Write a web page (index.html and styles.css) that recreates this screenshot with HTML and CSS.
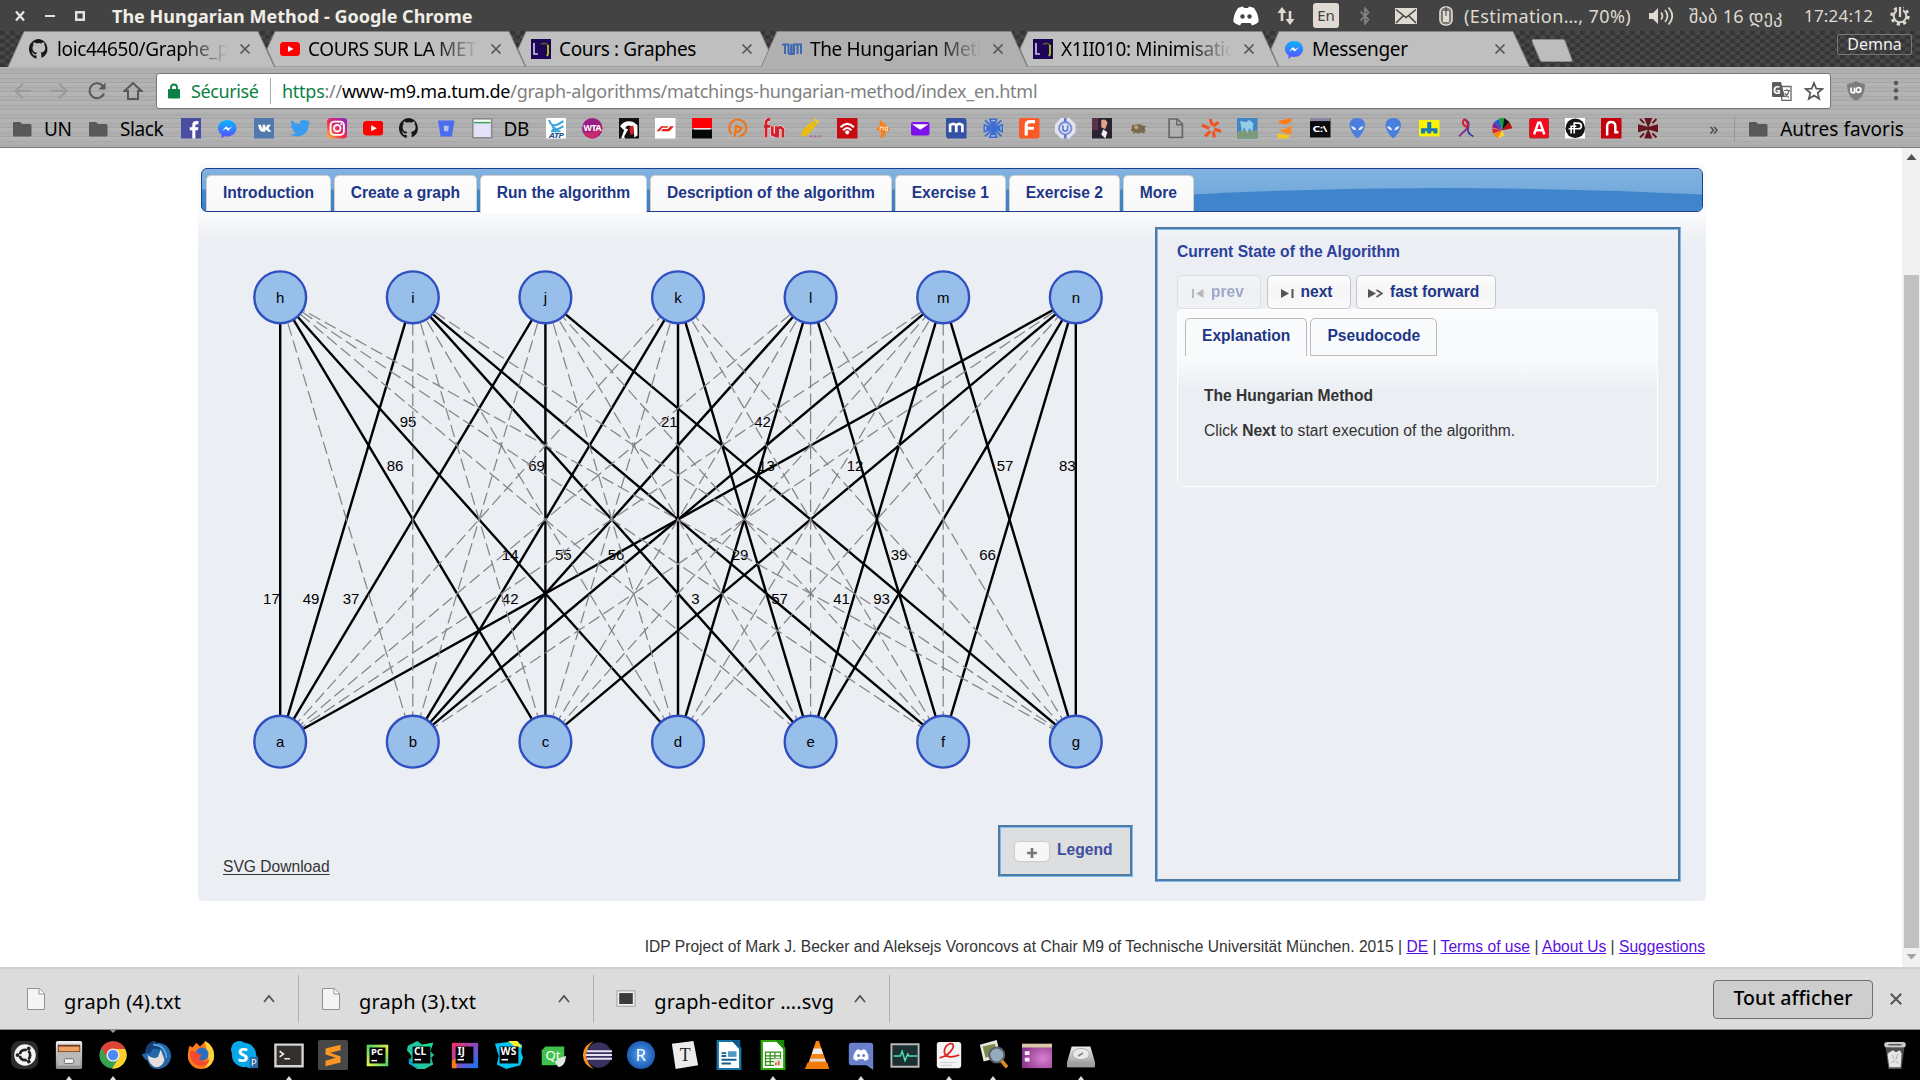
FILE: index.html
```html
<!DOCTYPE html>
<html lang="en">
<head>
<meta charset="utf-8">
<title>The Hungarian Method</title>
<link rel="stylesheet" href="styles.css">
</head>
<body>
<svg width="0" height="0" class="defs">
  <defs>
    <linearGradient id="insta" x1="0" y1="1" x2="1" y2="0"><stop offset="0" stop-color="#fdc33c"/><stop offset=".4" stop-color="#f3314b"/><stop offset="1" stop-color="#8a1fd0"/></linearGradient>
    <linearGradient id="msg" x1="0" y1="0" x2="0" y2="1"><stop offset="0" stop-color="#0ab4ff"/><stop offset="1" stop-color="#5a4bff"/></linearGradient>
    <linearGradient id="steel" x1="0" y1="0" x2="0" y2="1"><stop offset="0" stop-color="#eee"/><stop offset="1" stop-color="#8e8e8e"/></linearGradient>
    <linearGradient id="jb" x1="0" y1="0" x2="1" y2="1"><stop offset="0" stop-color="#fe315d"/><stop offset=".5" stop-color="#8a4ac0"/><stop offset="1" stop-color="#087cfa"/></linearGradient>
    <linearGradient id="pc" x1="0" y1="1" x2="1" y2="0"><stop offset="0" stop-color="#fcf84a"/><stop offset=".5" stop-color="#4fd36a"/><stop offset="1" stop-color="#f0e94c"/></linearGradient>
    <radialGradient id="purple" cx=".7" cy=".6" r=".7"><stop offset="0" stop-color="#d982d0"/><stop offset="1" stop-color="#8f3591"/></radialGradient>
    <radialGradient id="rblue"><stop offset="0" stop-color="#5aa2ee"/><stop offset="1" stop-color="#1b5bb5"/></radialGradient>
    <symbol id="github" viewBox="0 0 16 16"><path d="M8 0C3.6 0 0 3.6 0 8c0 3.500 2.300 6.500 5.500 7.600.4.100.5-.2.500-.4v-2c-2 .400-2.600-.5-2.800-1-.1-.200-.5-1-.8-1.100-.3-.2-.7-.6 0-.6.600 0 1.100.600 1.200.8.700 1.200 1.900.9 2.300.7.100-.5.300-.9.500-1.100-1.800-.2-3.600-.9-3.600-4 0-.9.300-1.600.8-2.100-.1-.2-.4-1 .1-2.100 0 0 .7-.2 2.200.8a7.600 7.600 0 0 1 4 0c1.500-1 2.200-.8 2.200-.8.400 1.100.2 1.900.1 2.100.5.600.8 1.300.8 2.100 0 3.100-1.900 3.800-3.700 4 .3.200.6.700.6 1.500v2.200c0 .200.100.500.5.4A8 8 0 0 0 8 0z" fill="#161616"/></symbol>
    <symbol id="youtube" viewBox="0 0 20 20"><rect x="0" y="3" width="20" height="14" rx="3.500" fill="#f00"/><path d="M8 7l5.500 3L8 13z" fill="#fff"/></symbol>
    <symbol id="messenger" viewBox="0 0 20 20"><path d="M10 2c5 0 9 3.500 9 8s-4 8-9 8q-1.500 0-2.600-.4L4.500 20v-3.700C2.500 15 1 12.800 1 10c0-4.500 4-8 9-8z" fill="url(#msg)"/><path d="M4.800 12.600L9 8l2.300 2.200L15 8l-4.200 4.600-2.300-2.200z" fill="#fff"/></symbol>
    <symbol id="lms" viewBox="0 0 20 20"><path d="M0 0h20v20H0z" fill="#1f0558"/><path d="M3 4v11h4" stroke="#c9c4e0" stroke-width="1.700" fill="none"/><path d="M10 5q6-2 7 2" stroke="#4a5f2a" stroke-width="1.600" fill="none"/><path d="M17 6v9l-1 2" stroke="#b3c91c" stroke-width="1.800" fill="none"/></symbol>
    <symbol id="folder" viewBox="0 0 20 16"><path d="M1 2q0-1 1-1h6l2 2h8q1.500 0 1.500 1.500V14q0 1.500-1.500 1.500H2Q1 15.500 1 14z" fill="#595959"/></symbol>
    <symbol id="alien" viewBox="0 0 20 20"><path d="M10 0c5 0 7.500 3 7.500 7S13 18 10 20C7 18 2.500 11 2.500 7S5 0 10 0z" fill="#4a7fdd"/><path d="M4 8q4 0 5 4-4 0-5-4zM16 8q-4 0-5 4 4 0 5-4z" fill="#e8eef8"/></symbol>
    <symbol id="discord" viewBox="0 0 26 20"><path d="M5 2q3-1.500 5-1.500l1 1.500h4l1-1.500q2 0 5 1.500 5 7 4.500 14-3 3-6.500 3.500L17.500 17h-9L7 19.500Q3.500 19 .5 16 0 9 5 2z" fill="currentColor"/></symbol>
    <symbol id="page" viewBox="0 0 20 22"><path d="M1.500.5h12l5 5v16h-17z" fill="#f4f4f4" stroke="#8f958f"/><path d="M13 .5V6h5.500" fill="#fff" stroke="#8f958f"/></symbol>
    <symbol id="close" viewBox="0 0 12 12"><path d="M1.500 1.500l9 9m0-9l-9 9" stroke="#555" stroke-width="1.700"/></symbol>
    <symbol id="up" viewBox="0 0 12 10"><path d="M1 8l5-6 5 6" stroke="#555" stroke-width="1.800" fill="none"/></symbol>
  </defs>
</svg>

<header class="titlebar">
  <div class="winctl">
    <svg width="12" height="12" viewBox="0 0 12 12"><path d="M2 1.500l8 9m0-9l-8 9" stroke="#e4e1da" stroke-width="2.400"/></svg>
    <svg width="12" height="12" viewBox="0 0 12 12"><path d="M1 6h10" stroke="#e4e1da" stroke-width="2"/></svg>
    <svg width="12" height="12" viewBox="0 0 12 12"><path d="M2.200 2.200h7.600v7.600H2.200z" fill="none" stroke="#e4e1da" stroke-width="2.400"/></svg>
  </div>
  <h1 class="wintitle">The Hungarian Method - Google Chrome</h1>
  <div class="tray">
    <svg class="tray-discord" width="26" height="20"><use href="#discord"/><circle cx="9.500" cy="10.500" r="2.200" fill="#434343"/><circle cx="16.500" cy="10.500" r="2.200" fill="#434343"/></svg>
    <svg class="tray-net" width="20" height="20" viewBox="0 0 20 20"><path d="M6 15V5M14 5v10" stroke="#dfdbd2" stroke-width="2.600"/><path d="M1.500 7L6 1l4.500 6zM9.500 13l4.500 6 4.500-6z" fill="#dfdbd2"/></svg>
    <span class="lang">En</span>
    <svg class="tray-bt" width="12" height="20" viewBox="0 0 12 20"><path d="M1.500 5.500l8 8L6 17.500v-15l3.500 4-8 8" fill="none" stroke="#858585" stroke-width="1.700"/></svg>
    <svg class="tray-mail" width="22" height="16" viewBox="0 0 22 16"><path d="M0 0h22v16H0z" fill="#dfdbd2"/><path d="M1 1.500l10 8 10-8M1 15l7-7m13 7l-7-7" stroke="#434343" stroke-width="1.500" fill="none"/></svg>
    <svg class="tray-mouse" width="14" height="20" viewBox="0 0 14 20"><rect x="1" y="1" width="12" height="18" rx="5" fill="#7b7974" stroke="#dfdbd2" stroke-width="1.600"/><rect x="4" y="5" width="6" height="11" fill="#dfdbd2"/><path d="M7 1v9" stroke="#434343"/></svg>
    <span class="tray-batt">(Estimation…, 70%)</span>
    <svg class="tray-vol" width="26" height="20" viewBox="0 0 26 20"><path d="M1 7h4l5-5v16l-5-5H1z" fill="#dfdbd2"/><path d="M13 6.500q3 3.500 0 7M17 4q5 6 0 12M20.500 1.500q7.500 8.500 0 17" fill="none" stroke="#dfdbd2" stroke-width="1.700"/></svg>
    <span class="tray-date">შაბ 16 დეკ</span>
    <span class="tray-time">17:24:12</span>
    <svg class="tray-gear" width="20" height="20" viewBox="0 0 20 20"><circle cx="10" cy="10" r="6.300" fill="none" stroke="#dfdbd2" stroke-width="2"/><circle cx="10" cy="10" r="8.400" fill="none" stroke="#dfdbd2" stroke-width="2.600" stroke-dasharray="3.200 3.400"/><path d="M10 0v11" stroke="#434343" stroke-width="6"/><path d="M10 1v10" stroke="#dfdbd2" stroke-width="2.200"/></svg>
  </div>
</header>

<nav class="tabstrip">
  <div class="tab"><svg class="tabshape" viewBox="0 0 267 36"><path d="M0 36L16 .5H250L266.500 36"/></svg><svg class="fav"><use href="#github"/></svg><span class="tablabel fade">loic44650/Graphe_p</span><svg class="x"><use href="#close"/></svg></div>
  <div class="tab"><svg class="tabshape" viewBox="0 0 267 36"><path d="M8 18L16 .5H250L266.500 36H16z"/></svg><svg class="fav"><use href="#youtube"/></svg><span class="tablabel fade">COURS SUR LA MET</span><svg class="x"><use href="#close"/></svg></div>
  <div class="tab"><svg class="tabshape" viewBox="0 0 267 36"><path d="M8 18L16 .5H250L266.500 36H16z"/></svg><svg class="fav"><use href="#lms"/></svg><span class="tablabel">Cours : Graphes</span><svg class="x"><use href="#close"/></svg></div>
  <div class="tab active"><svg class="tabshape" viewBox="0 0 267 36"><path d="M0 36L16 .5H250L266.500 36"/></svg><svg class="fav" viewBox="0 0 20 20"><path d="M0 5.500h6.500V15M3 6v9M6.500 15h5V5.500M9.200 15V5M12 15V5.500h7V15M15.500 6v9" fill="none" stroke="#3f69b3" stroke-width="2"/></svg><span class="tablabel fade">The Hungarian Meth</span><svg class="x"><use href="#close"/></svg></div>
  <div class="tab"><svg class="tabshape" viewBox="0 0 267 36"><path d="M8 18L16 .5H250L266.500 36H16z"/></svg><svg class="fav"><use href="#lms"/></svg><span class="tablabel fade">X1II010: Minimisatio</span><svg class="x"><use href="#close"/></svg></div>
  <div class="tab"><svg class="tabshape" viewBox="0 0 267 36"><path d="M8 18L16 .5H250L266.500 36H16z"/></svg><svg class="fav"><use href="#messenger"/></svg><span class="tablabel">Messenger</span><svg class="x"><use href="#close"/></svg></div>
  <svg class="newtab" width="44" height="26" viewBox="0 0 44 26"><path d="M2 1.500h30q1.500 0 2 1.500l7 19q.5 1.500-1 1.500H11q-1.500 0-2-1.500L1 3q-.5-1.500 1-1.500z" fill="#bdbdbd" stroke="#8b8b8b"/></svg>
  <span class="profile">Demna</span>
</nav>

<section class="toolbar">
  <div class="navrow">
    <div class="navbtns">
      <svg width="20" height="20" viewBox="0 0 20 20"><path d="M18 10H3m7-7.500L2.500 10l7.500 7.500" fill="none" stroke="#999" stroke-width="2"/></svg>
      <svg width="20" height="20" viewBox="0 0 20 20"><path d="M2 10h15M10 2.500l7.500 7.500-7.500 7.500" fill="none" stroke="#999" stroke-width="2"/></svg>
      <svg width="20" height="20" viewBox="0 0 20 20"><path d="M15.800 5A7.500 7.500 0 1 0 17 12.500" fill="none" stroke="#585858" stroke-width="2.100"/><path d="M18.500 1.500v7h-7z" fill="#585858"/></svg>
      <svg width="20" height="20" viewBox="0 0 20 20"><path d="M1.500 10L10 2l8.500 8H15v8H5v-8z" fill="none" stroke="#585858" stroke-width="2"/></svg>
    </div>
    <div class="omnibox">
      <svg class="lock" width="12" height="16" viewBox="0 0 12 16"><rect y="6" width="12" height="9.500" rx="1" fill="#0b8043"/><path d="M3 7V4.500q0-3 3-3t3 3V7" fill="none" stroke="#0b8043" stroke-width="1.800"/></svg>
      <span class="secure">Sécurisé</span>
      <span class="url"><span class="scheme">https</span>://<b>www-m9.ma.tum.de</b>/graph-algorithms/matchings-hungarian-method/index_en.html</span>
      <svg class="translate" width="20" height="19" viewBox="0 0 20 19"><path d="M8 4.500h11v13.800H10z" fill="#fff" stroke="#666" stroke-width="1.300"/><path d="M0 1q0-1 1-1h8l4 15H1q-1 0-1-1z" fill="#5b5b5b"/><text x="1" y="11.500" font-size="10.500" font-weight="700" fill="#fff">G</text><path d="M12 8.500h6M15 7v2m2 0q-1 4-4 6m0-4q1 3 4 4.500" stroke="#666" fill="none" stroke-width="1.200"/></svg>
      <svg width="20" height="20" viewBox="0 0 20 20"><path d="M10 2l2.300 5.600 6 .4-4.600 3.900 1.500 5.900-5.200-3.300-5.200 3.300 1.500-5.900L1.700 8l6-.4z" fill="none" stroke="#555" stroke-width="1.700"/></svg>
    </div>
    <svg class="ublock" width="18" height="20" viewBox="0 0 18 20"><path d="M9 0q4 3 9 3 0 13-9 17Q0 16 0 3q5 0 9-3z" fill="#7c7c7c"/><path d="M4 6.500v3.500q0 1.700 2 1.700h1.500V6.500" fill="none" stroke="#fff" stroke-width="1.700"/><circle cx="11.500" cy="9" r="2.300" fill="none" stroke="#fff" stroke-width="1.700"/></svg>
    <svg class="dots" width="6" height="22" viewBox="0 0 6 22"><circle cx="3" cy="3" r="2.200"/><circle cx="3" cy="10.500" r="2.200"/><circle cx="3" cy="18" r="2.200"/></svg>
  </div>
  <div class="bookmarks">
    <span class="bmf un"><svg width="20" height="16"><use href="#folder"/></svg>UN</span>
    <span class="bmf slack"><svg width="20" height="16"><use href="#folder"/></svg>Slack</span>
    <div class="icons">
      <i><svg viewBox="0 0 20 20"><path d="M0 0h20v20H0z" fill="#4a4ea3"/><path d="M11 20v-8H8.500V9H11V7q0-4 4-4h2v3h-1.500q-1.500 0-1.500 1.500V9h3l-.5 3H14v8z" fill="#fff"/></svg></i>
      <i><svg><use href="#messenger"/></svg></i>
      <i><svg viewBox="0 0 20 20"><path d="M0 0h20v20H0z" fill="#5179ab"/><path d="M4 6.500h2.500l2 4.500V6.500h2.500V9.500l2.500-3h3L14 10l3 3.500h-3l-3-2.500v2.500H9Q5 13.500 4 6.500z" fill="#fff"/></svg></i>
      <i><svg viewBox="0 0 20 20"><path d="M0 16q4 .5 6-1.500-3-.5-3.500-3h1.500Q.5 10 1 7l1.500.5Q0 5 1.500 2q3.500 4 8 4Q9 2 13.500 2q2 0 3 1L19 2l-1.500 2.500L20 4l-2 2.500Q18 17 7.500 18 3.500 18 0 16z" fill="#3a9bf0"/></svg></i>
      <i><svg viewBox="0 0 20 20"><rect width="20" height="20" rx="4" fill="url(#insta)"/><rect x="3.500" y="3.500" width="13" height="13" rx="3.500" fill="none" stroke="#fff" stroke-width="1.800"/><circle cx="10" cy="10" r="3.200" fill="none" stroke="#fff" stroke-width="1.800"/><circle cx="14" cy="6" r="1" fill="#fff"/></svg></i>
      <i><svg><use href="#youtube"/></svg></i>
      <i><svg><use href="#github"/></svg></i>
      <i><svg viewBox="0 0 20 20"><path d="M2 2.500h16L15.500 18h-11z" fill="#4a6df0"/><path d="M7.500 7.500h5l-.6 5.500H8z" fill="#b7bfe8"/></svg></i>
      <i><svg viewBox="0 0 20 20"><path d="M.8.800h18.400v18.400H.8z" fill="#e6e0fb" stroke="#8a8a8a" stroke-width="1.500"/><path d="M2 2h16v3H2z" fill="#f6fff6"/><path d="M2 4.500h16" stroke="#43a05a" stroke-width="1.500"/></svg></i>
    </div>
    <span class="db">DB</span>
    <div class="icons">
      <i><svg viewBox="0 0 20 20"><path d="M0 0h20v20H0z" fill="#fff"/><path d="M3 2q2 6 6 5t8-4M6 7q2 5 5 4t6-3M10 10q-4 1-4 3h8" stroke="#38a4dc" stroke-width="2" fill="none"/><text x="3" y="19.500" font-size="7" font-weight="700" font-style="italic" textLength="14" lengthAdjust="spacingAndGlyphs" fill="#24508e">ATP</text></svg></i>
      <i><svg viewBox="0 0 20 20"><circle cx="10" cy="10" r="10" fill="#9c1c86"/><path d="M1 14q9 2 18-8-1 13-9 14-6 0-9-6z" fill="#c72a6c"/><text x="1.500" y="13" font-size="8" font-weight="700" textLength="17" lengthAdjust="spacingAndGlyphs" fill="#fff">WTA</text></svg></i>
      <i><svg viewBox="0 0 20 20"><path d="M0 0h20v20H0z" fill="#111"/><path d="M1 8Q6 1 14 4l4 3v10l-3 2-1-10q-6-4-8 1l3 1-4 7 1 2H2l3-8z" fill="#fff"/><path d="M10 9l4-2v9h-3z" fill="#e01a22"/></svg></i>
      <i><svg viewBox="0 0 20 20"><path d="M0 0h20v20H0z" fill="#fff"/><path d="M1.500 13L6 8h7l-1 1.500H7L4.500 13zM6 13l1.500-2.200h5L15 8h3.500L14 13z" fill="#e32119"/></svg></i>
      <i><svg viewBox="0 0 20 20"><path d="M0 0h20v10H0z" fill="#fc0003"/><path d="M0 11h20v9H0z" fill="#040a0c"/><path d="M2 10h16v1.200H2z" fill="#fff"/></svg></i>
      <i><svg viewBox="0 0 20 20"><path d="M3.500 15.500A8.300 8.300 0 1 1 11 18" fill="none" stroke="#f0741a" stroke-width="2"/><path d="M6.500 18.500l1.500-11 5.500 2.500-5 4.500" fill="none" stroke="#f0741a" stroke-width="2.200" stroke-linejoin="round"/></svg></i>
      <i><svg viewBox="0 0 20 20"><path d="M2 19V4q0-3 4-2.500M0 8h6M8 8v7q0 3 4 1V8m0 8v3m1.500 0V11q2-4 5 0v8" fill="none" stroke="#fff" stroke-width="4"/><path d="M2 19V4q0-3 4-2.500M0 8h6M8 8v7q0 3 4 1V8m0 8v3m1.500 0V11q2-4 5 0v8" fill="none" stroke="#d3202c" stroke-width="2.900"/></svg></i>
      <i><svg viewBox="0 0 20 20"><path d="M0 18l1.500-6L11 2.500l4.500 4L6 17z" fill="#eabb12"/><path d="M12 1.500l2-1.500 4 4-1.500 2z" fill="#f0c92a"/><path d="M9 18h2M13 18h2M17 18h2" stroke="#b05ba0" stroke-width="1.800"/></svg></i>
      <i><svg viewBox="0 0 20 20"><path d="M0 0h20v20H0z" fill="#c80b12"/><path d="M3.500 9q6.500-6.500 13 0M6 12q4-4.500 8 0" fill="none" stroke="#fff" stroke-width="2"/><circle cx="10" cy="14" r="2" fill="#fff"/></svg></i>
      <i><svg viewBox="0 0 20 20"><path d="M6 1l6 5 5 6-4 1-2 5-4 2 1-6-5-3 4-4z" fill="#f5821f"/><path d="M7 12V9h3v3m2-3v3h2V9z" stroke="#fbe3c8" fill="none"/></svg></i>
      <i><svg viewBox="0 0 20 20"><rect x="1" y="4" width="18" height="13" rx="2" fill="#7b12ee"/><path d="M2 6l8 5.500L18 6" fill="#fff" /></svg></i>
      <i><svg viewBox="0 0 20 20"><path d="M0 0h17q3 0 3 3v17H3q-3 0-3-3z" fill="#3352a6"/><path d="M4 14V5.500M4 7q3-2.500 6 0v7m0-7q3-2.500 6 0v7" fill="none" stroke="#fff" stroke-width="2.600"/></svg></i>
      <i><svg viewBox="0 0 20 20"><path d="M5.500.5h9L11.500 8.500 19.500 5.500v9l-8-3 3 8h-9l3-8-8 3v-9l8 3z" fill="#3b6ed2"/><path d="M2 2l16 16M18 2L2 18" stroke="#3b6ed2" stroke-width="1.800"/><path d="M8 2.500h4M8 17.500h4M2.500 8v4M17.500 8v4" stroke="#a9bfe6" stroke-width="1.200"/></svg></i>
      <i><svg viewBox="0 0 20 20"><rect width="20" height="20" rx="2" fill="#fb5a25"/><path d="M7 17V7q0-3.500 4-3.500h4.500M7 10h7.500" fill="none" stroke="#fff" stroke-width="3"/></svg></i>
      <i><svg viewBox="0 0 20 20"><path d="M6 0h8l6 6v8l-6 6H6l-6-6V6z" fill="#e3e6ef"/><circle cx="10" cy="10" r="6" fill="none" stroke="#7f93dc" stroke-width="2"/><path d="M10 0v4M10 16v4" stroke="#5f77cf" stroke-width="2.500"/><path d="M7.700 7v3.500q0 2.300 2.300 2.300t2.300-2.300V7" stroke="#5f77cf" stroke-width="1.600" fill="none"/></svg></i>
      <i><svg viewBox="0 0 20 20"><path d="M0 0h20v20H0z" fill="#2b2232"/><path d="M0 0h6v12H0z" fill="#5a3148"/><path d="M9 2q5-2 6 3l-2 6-4-2z" fill="#e3a287"/><path d="M11 11l4 3-2 6-4-4z" fill="#f0eeee"/></svg></i>
      <i><svg viewBox="0 0 20 20"><ellipse cx="10" cy="10.500" rx="6.500" ry="4.500" fill="#7b6a4e"/><path d="M4 7l3 4-4 1M17 8l-3 2 3 3M6 14l-1 1M14 13l2 2" stroke="#756544" stroke-width="1.500" fill="none"/><circle cx="8" cy="9" r="2" fill="#b3a37e"/></svg></i>
      <i><svg viewBox="0 0 20 20"><path d="M4 1h8l5 5v13H4z" fill="none" stroke="#666" stroke-width="1.600"/><path d="M11.500 1v5.500H17" fill="none" stroke="#666" stroke-width="1.400"/></svg></i>
      <i><svg viewBox="0 0 20 20"><path d="M9 1l2 6M17 4l-5 4M20 13l-7-2M13 19l-1-6M4 18l5-5M1 7l7 3" fill="none" stroke="#f4511e" stroke-width="3"/></svg></i>
      <i><svg viewBox="0 0 20 20"><path d="M0 0h20v20H0z" fill="#3e86c6"/><path d="M0 14q6-4 10-2t10-1v9H0z" fill="#7b9a7a"/><path d="M3 3l6 1 3-2 4 3-1 9-3-4-2 5-3-6-2 5z" fill="#93cbe8"/></svg></i>
      <i><svg viewBox="0 0 20 20"><path d="M17 0q1 4-4 6-7 1-9-3z" fill="#ff7a1a"/><path d="M17 7v9q-8 0-12-5 6 1 12-4z" fill="#ff8a1f"/><path d="M3 15l13 2-3 3H4z" fill="#f6c521"/></svg></i>
      <i><svg viewBox="0 0 20 20"><path d="M0 0h20v19H0z" fill="#0b0b0f"/><path d="M0 0h20v3H0z" fill="#8d84a8"/><text x="2.500" y="13.500" font-size="8" font-weight="700" fill="#fff" textLength="14" lengthAdjust="spacingAndGlyphs">C:\</text></svg></i>
      <i><svg><use href="#alien"/></svg></i>
      <i><svg><use href="#alien"/></svg></i>
      <i><svg viewBox="0 0 20 20"><path d="M0 2h20v16H0z" fill="#fbf500"/><path d="M8 4h4v6h6v5h-4v-2h-2v2H8v-2H6v2H2v-5h6z" fill="#1a78b8"/></svg></i>
      <i><svg viewBox="0 0 20 20"><path d="M8 1q6 2 4 8t5 9" stroke="#2a35a8" stroke-width="1.600" fill="none"/><path d="M8 1q-4 5 3 8 2-4-3-8" stroke="#d32038" stroke-width="2" fill="none"/><path d="M11 10l-8 8" stroke="#8a2a8c" stroke-width="1.800"/></svg></i>
      <i><svg viewBox="0 0 20 20"><path d="M10 12L0 9l2-5z" fill="#8b1d8c"/><path d="M10 12L2 4l5-3z" fill="#1b5bd0"/><path d="M10 12L7 0h5z" fill="#1a9a3c"/><path d="M10 12l2-12 5 4z" fill="#111"/><path d="M10 12l7-8 3 6z" fill="#b11"/><path d="M10 12L0 10l1 5z" fill="#e8262a"/><path d="M10 12l-9 4 5 4z" fill="#fb8c00"/><path d="M10 12L6 20l6-3z" fill="#fdd835"/></svg></i>
      <i><svg viewBox="0 0 20 20"><rect x=".5" y=".5" width="19" height="19" rx="2" fill="#f5081d" stroke="#a33"/><path d="M5 16l4-11.500h2L15 16M6.500 12h7" stroke="#fff" stroke-width="2.400" fill="none"/></svg></i>
      <i><svg viewBox="0 0 20 20"><path d="M0 0h20v20H0z" fill="#fff"/><circle cx="10" cy="10" r="9.500" fill="#151515"/><path d="M6 15V8h5M9 15V5h4q3 0 3 2.700T13 10.500H3.500" fill="none" stroke="#fff" stroke-width="1.600"/></svg></i>
      <i><svg viewBox="0 0 20 20"><path d="M0 0h20v20H0z" fill="#c4000c"/><path d="M6 17V8q0-4 4-4t4 4v6h3" fill="none" stroke="#fff" stroke-width="2.400"/></svg></i>
      <i><svg viewBox="0 0 20 20"><path d="M6 0h8l-3.500 8.500L20 6v8l-9.500-2.500L14 20H6l3.500-8.500L0 14V6l9.500 2.500z" fill="#68141c"/><path d="M2 1l4 4M18 1l-4 4M2 19l4-4M18 19l-4-4" stroke="#68141c" stroke-width="2"/></svg></i>
    </div>
    <span class="more">»</span>
    <span class="bmf other"><svg width="20" height="16"><use href="#folder"/></svg>Autres favoris</span>
  </div>
</section>

<main class="viewport">
  <div class="content">
    <div class="pane">
      <ul class="maintabs">
        <li>Introduction</li><li>Create a graph</li><li class="sel">Run the algorithm</li><li>Description of the algorithm</li><li>Exercise 1</li><li>Exercise 2</li><li>More</li>
        <svg class="wave" viewBox="0 0 510 43" preserveAspectRatio="none"><path d="M0 26Q250 13 510 26V43H0z" fill="#4085cc"/></svg>
      </ul>
      <div class="body">
        <div class="left">
          <svg class="graph" width="950" height="613" viewBox="198 212 950 613"></svg>
          <div class="underline">
            <a class="dl">SVG Download</a>
            <div class="legend"><span class="plus"><svg width="12" height="12" viewBox="0 0 12 12"><path d="M6 1v10M1 6h10" stroke="#777" stroke-width="2.600"/></svg></span>Legend</div>
          </div>
        </div>
        <aside class="state">
          <h2>Current State of the Algorithm</h2>
          <div class="buttons">
            <span class="btn off"><svg width="13" height="9" viewBox="0 0 13 9"><path d="M1 0h2v9H1zM12.500 0v9L5 4.500z" fill="#666"/></svg>prev</span>
            <span class="btn"><svg width="13" height="9" viewBox="0 0 13 9"><path d="M10.500 0h2v9h-2zM0 0v9l8-4.500z" fill="#555"/></svg>next</span>
            <span class="btn ff"><svg width="15" height="9" viewBox="0 0 15 9"><path d="M0 0v9l8-4.500z" fill="#555"/><path d="M8.500 1L14 4.500 8.500 8" fill="none" stroke="#555" stroke-width="1.600"/></svg>fast forward</span>
          </div>
          <div class="inner">
            <div class="subtabs"><span class="on">Explanation</span><span>Pseudocode</span></div>
            <h3>The Hungarian Method</h3>
            <p>Click <b>Next</b> to start execution of the algorithm.</p>
          </div>
        </aside>
      </div>
    </div>
    <footer>IDP Project of Mark J. Becker and Aleksejs Voroncovs at Chair M9 of Technische Universität München. 2015 | <a>DE</a> | <a>Terms of use</a> | <a>About Us</a> | <a>Suggestions</a></footer>
  </div>
  <div class="scroll">
    <svg width="18" height="20" viewBox="0 0 18 20"><path d="M4.500 12L9.500 6l5 6z" fill="#505050"/></svg>
    <div class="thumb"></div>
    <svg width="18" height="18" viewBox="0 0 18 18"><path d="M4.500 6L9.500 11.500l5-5.500z" fill="#a3a3a3"/></svg>
  </div>
</main>

<section class="shelf">
  <div class="dlitem"><svg width="20" height="22"><use href="#page"/></svg><span>graph (4).txt</span><svg class="chev" width="12" height="10"><use href="#up"/></svg></div>
  <div class="dlitem"><svg width="20" height="22"><use href="#page"/></svg><span>graph (3).txt</span><svg class="chev" width="12" height="10"><use href="#up"/></svg></div>
  <div class="dlitem"><svg width="20" height="22" viewBox="0 0 22 22"><path d="M1 2h20v17H1z" fill="#eee" stroke="#999"/><path d="M3.500 4.500h15v12h-15z" fill="#3b3b3b"/></svg><span>graph-editor ….svg</span><svg class="chev" width="12" height="10"><use href="#up"/></svg></div>
  <span class="showall">Tout afficher</span>
  <svg class="shelfx" width="14" height="14"><use href="#close"/></svg>
</section>

<nav class="launcher">
  <i><svg viewBox="0 0 32 32"><rect x="1" y="1" width="29" height="30" rx="9" fill="#2c2c2c"/><circle cx="16" cy="16" r="11.500" fill="#f4f4f4"/><circle cx="16" cy="16" r="5.500" fill="none" stroke="#222" stroke-width="3"/><path d="M16 16L8 16M16 16l4-7M16 16l4 7" stroke="#f4f4f4" stroke-width="1.500"/><circle cx="8" cy="16" r="2" fill="#222"/><circle cx="20" cy="9" r="2" fill="#222"/><circle cx="20" cy="23" r="2" fill="#222"/></svg></i>
  <i class="run"><svg viewBox="0 0 32 32"><rect x="2" y="1" width="28" height="30" rx="2" fill="url(#steel)"/><path d="M4 5h24v8H4z" fill="#6b3b22"/><path d="M5 7h22v5H5z" fill="#f0a064"/><path d="M4 13h24v14H4z" fill="#b9b9b9"/><rect x="11" y="20" width="10" height="5" rx="1" fill="#f4f4f4" stroke="#666"/></svg></i>
  <i class="run top"><svg viewBox="0 0 32 32"><circle cx="16" cy="16" r="14.500" fill="#37a24f"/><path d="M16 16L3.400 8.700A14.500 14.500 0 0 1 29 9.500H16z" fill="#db4437"/><path d="M3.400 8.700L10 19l6-3V9.500z" fill="#db4437"/><path d="M29 9.500A14.500 14.500 0 0 1 15 30.500l7-11-6-10z" fill="#fdd02f"/><circle cx="16" cy="16" r="7" fill="#eee"/><circle cx="16" cy="16" r="5.500" fill="#4a8af4"/></svg></i>
  <i><svg viewBox="0 0 32 32"><path d="M4 14Q3 4 13 1l2 2q14 0 16 13 0 12-13 15Q8 31 6 22q-5-2-6-7z" fill="#2467a8"/><path d="M13 1Q4 4 3 13l5 2 4-6 8 1q-2-6-7-9z" fill="#153f78"/><path d="M6 16q5 5 11 2l3-8 4 11q-2 8-9 8-8-2-9-13z" fill="#e8dfdc"/><path d="M12 5q13 0 14 14" stroke="#5aa5e0" fill="none" stroke-width="2"/></svg></i>
  <i><svg viewBox="0 0 32 32"><path d="M4 6l3 2 4-5 4 4 6-6q9 6 9 16a14 14 0 0 1-28 0Q2 10 4 6z" fill="#ff7a18"/><path d="M20 1q10 5 10 16-1 10-10 13 6-8 3-15z" fill="#ffd43a"/><circle cx="17" cy="15" r="7" fill="#2d6ec2"/><path d="M4 12q7-1 9 3l4 1-3 4 4 3q6 0 7-3 0 7-9 8Q4 26 4 12z" fill="#f54a32"/></svg></i>
  <i><svg viewBox="0 0 32 32"><circle cx="10" cy="10" r="9" fill="#08a7ea"/><circle cx="15" cy="16" r="13" fill="#08a7ea"/><circle cx="22" cy="22" r="8" fill="#08a7ea"/><text x="8" y="23" font-size="21" font-weight="700" fill="#fff">S</text><path d="M21 18h9v12h-9z" fill="#2a68a8"/><text x="22.500" y="28" font-size="10" fill="#fff">P</text></svg></i>
  <i class="run"><svg viewBox="0 0 32 32"><path d="M1.500 5h29v23h-29z" fill="#34302e" stroke="#d5d5d5" stroke-width="2.500"/><path d="M6 12l4 3-4 3M11 20h6" stroke="#eee" stroke-width="1.800" fill="none"/></svg></i>
  <i><svg viewBox="0 0 32 32"><rect width="32" height="32" rx="2" fill="#474747"/><path d="M24 5v6L13 13.500l11 4V24L8 28v-6l11-3L8 15.500V9z" fill="#fb9524"/></svg></i>
  <i><svg viewBox="0 0 32 32"><path d="M5 5h23v23H5z" fill="url(#pc)"/><path d="M8 8h17v17H8z" fill="#000"/><text x="9.500" y="16.500" font-size="10" font-weight="700" fill="#fff">PC</text><path d="M10 22h6" stroke="#fff" stroke-width="1.500"/></svg></i>
  <i><svg viewBox="0 0 32 32"><path d="M2 6l10-5 5 4 12-2-3 9 4 4-3 3 2 7-9 5H12l-9-6 3-8-5-6z" fill="#22c7a0"/><path d="M12 1l5 4 12-2-3 8-8-4z" fill="#22d88f"/><path d="M3 19l6 8 5 4-11-6z" fill="#0a9bd8"/><path d="M7 7h19v18H7z" fill="#000"/><text x="8.500" y="16" font-size="11" font-weight="700" fill="#fff">CL</text><path d="M9 21h7" stroke="#fff" stroke-width="1.700"/></svg></i>
  <i><svg viewBox="0 0 32 32"><path d="M2 3h28v27H2z" fill="url(#jb)"/><path d="M2 22l5-4v12H2z" fill="#f97a12"/><path d="M6 7h19v18H6z" fill="#000"/><text x="8" y="16" font-size="11" font-weight="700" fill="#fff">IJ</text><path d="M8 21h7" stroke="#fff" stroke-width="1.700"/></svg></i>
  <i><svg viewBox="0 0 32 32"><path d="M1 4l14-2 7-1 8 4-1 8 2 6-3 8-8 2-7 2-10-5 2-9z" fill="#07c3f2"/><path d="M15 1l10 0 5 7-8-1z" fill="#fcee39"/><path d="M6 7h20v18H6z" fill="#000"/><text x="7" y="16" font-size="11" font-weight="700" fill="#fff" textLength="17">WS</text><path d="M8 21h7" stroke="#fff" stroke-width="1.700"/></svg></i>
  <i><svg viewBox="0 0 32 32"><path d="M8 7h20v15l-5 5H4V11z" fill="#3fc24c"/><text x="8" y="21" font-size="14" fill="#fff">Qt</text><path d="M18 24q2-5 12-7-1 11-8 12z" fill="#dfe5df"/></svg></i>
  <i><svg viewBox="0 0 32 32"><path d="M13 1Q1 5 1 16t12 15Q5 26 5 16T13 1z" fill="#f7941e"/><circle cx="18" cy="16" r="13.500" fill="#3b3160"/><path d="M5 12h27M4 16h28M5 20h27" stroke="#e6e4f2" stroke-width="2"/></svg></i>
  <i><svg viewBox="0 0 32 32"><circle cx="16" cy="16" r="15" fill="url(#rblue)"/><text x="10" y="22" font-size="18" fill="#fff">R</text></svg></i>
  <i><svg viewBox="0 0 32 32"><path d="M2 4l23-3 5 26-24 4z" fill="#ececec"/><text x="10.500" y="22" font-family="Liberation Serif, serif" font-size="19" fill="#222">T</text></svg></i>
  <i><svg viewBox="0 0 32 32"><path d="M4 1h17l7 8v22H4z" fill="#fff" stroke="#1673a5" stroke-width="2.500"/><path d="M18 0h10v10z" fill="#0c5c90"/><path d="M8 14h5M8 17h5M8 21h16M8 25h10" stroke="#14608f" stroke-width="2"/><path d="M15 12h9v6h-9z" fill="#4c9ac5"/></svg></i>
  <i class="run"><svg viewBox="0 0 32 32"><path d="M4 1h17l7 8v22H4z" fill="#fff" stroke="#2ba80c" stroke-width="2.500"/><path d="M18 0h10v10z" fill="#1c8a05"/><path d="M8 13h16v14H8zM8 17h16M8 20h16M8 23h16M13 13v14M18 13v14" stroke="#2f8f15" stroke-width="1.300" fill="none"/><path d="M17 20h9v8h-9z" fill="#e5efe6"/><path d="M19 27v-3M22 27v-5" stroke="#e2672a" stroke-width="2"/></svg></i>
  <i><svg viewBox="0 0 32 32"><path d="M15 1h3l9 26H6z" fill="#f98512"/><path d="M12.500 9h8l2 6H10.500z" fill="#eee"/><path d="M8.800 20h15.600l1 3H8z" fill="#ddd"/><path d="M6 24h21l2 7H3z" fill="#f07b0a"/></svg></i>
  <i class="run"><svg viewBox="0 0 32 32"><path d="M6 3h20q3 0 3 3v26l-7-5H6q-3 0-3-3V6q0-3 3-3z" fill="#6a80cc"/><path class="face" transform="translate(7.500 9.500) scale(.65)" d="M5 2q3-1.500 5-1.500l1 1.500h4l1-1.500q2 0 5 1.500 5 7 4.500 14-3 3-6.500 3.500L17.500 17h-9L7 19.500Q3.500 19 .5 16 0 9 5 2z" fill="#fff"/><circle cx="13.300" cy="16.500" r="1.600" fill="#6a80cc"/><circle cx="18.700" cy="16.500" r="1.600" fill="#6a80cc"/></svg></i>
  <i><svg viewBox="0 0 32 32"><path d="M1.500 4.500h29v24h-29z" fill="#1d3031" stroke="#b9b9b9" stroke-width="2"/><path d="M4 17h7l2-5 3 10 3-7 1 2h9" stroke="#4de0bd" stroke-width="1.600" fill="none"/></svg></i>
  <i class="run"><svg viewBox="0 0 32 32"><rect x="3" y="2" width="26" height="28" rx="3" fill="#f3f3f3"/><path d="M6 19q9-2 14-10 2-6-3-5-6 2-6 9 2 8 16 3" fill="none" stroke="#dd2222" stroke-width="1.800"/><path d="M7 24h16M7 27h12" stroke="#ccc"/></svg></i>
  <i class="run"><svg viewBox="0 0 32 32"><path d="M2 5l18-5 4 18-18 5z" fill="#e9e6dc"/><path d="M5 7l13-3 2 11-12 4z" fill="#7d8a4c"/><circle cx="20" cy="16" r="8" fill="#95a9bf" stroke="#596069" stroke-width="2.200"/><path d="M25 22l6 7" stroke="#d58c22" stroke-width="4"/></svg></i>
  <i><svg viewBox="0 0 32 32"><path d="M0 4h32v26H0z" fill="url(#purple)"/><path d="M0 4h32v4H0z" fill="#d9c9a5"/><path d="M3 12h5v4H3zM3 19h5v4H3z" fill="#f5eef5"/></svg></i>
  <i class="run"><svg viewBox="0 0 32 32"><path d="M6 7h20l5 17v5H1v-5z" fill="url(#steel)"/><ellipse cx="16" cy="15" rx="9" ry="6" fill="#e9e9e9" stroke="#aaa"/><path d="M13 17l5-3" stroke="#888" stroke-width="2"/><path d="M2 24h28v5H2z" fill="#9f9f9f"/></svg></i>
  <i class="trash"><svg viewBox="0 0 32 32"><path d="M6 8h20l-3 23H9z" fill="#4f4f4f"/><path d="M10 13l4-2 3 2 4-2 2 3-1 15H10L8 15z" fill="#e6e6e6"/><path d="M13 16l2 4M19 15l-2 6M12 24l4-2M20 25l-3-2" stroke="#aaa"/><rect x="4.500" y="2" width="23" height="6" rx="3" fill="#c9c9c9"/><path d="M9 5h14" stroke="#555" stroke-width="1.500"/></svg></i>
</nav>
<script src="graph.js"></script>
</body>
</html>
```
FILE: styles.css
```css
* { box-sizing: border-box; }
body {
  margin: 0; width: 1920px; height: 1080px; overflow: hidden;
  display: flex; flex-direction: column; background: #fff;
  font-family: "Noto Sans", "DejaVu Sans", sans-serif; color: #000;
}
svg { display: block; flex: none; }
.defs { position: absolute; }
i { font-style: normal; }

.titlebar { height: 31px; background: #434343; display: flex; align-items: center; flex: none; color: #dfdbd2; }
.winctl { display: flex; gap: 18px; padding-left: 14px; width: 112px; flex: none; }
.wintitle { margin: 0; font-size: 18px; line-height: 30px; font-weight: 700; letter-spacing: 0; color: #f0ede6; white-space: nowrap; flex: 1; }
.tray { display: flex; align-items: center; white-space: nowrap; font-size: 17px; height: 31px; flex: none; padding-right: 10px; }
.tray-discord { margin-right: 17px; color: #fff; }
.tray-net { margin-right: 17px; }
.lang { background: #dfdbd2; color: #434343; width: 26px; height: 25px; line-height: 25px; border-radius: 3px; text-align: center; font-size: 15px; margin-right: 20px; }
.tray-bt { margin-right: 24px; }
.tray-mail { margin-right: 22px; }
.tray-mouse { margin-right: 11px; }
.tray-batt { width: 184px; font-size: 18px; line-height: 28px; letter-spacing: .4px; }
.tray-vol { margin-right: 15px; }
.tray-date { width: 115px; font-size: 18px; letter-spacing: .3px; line-height: 28px; }
.tray-time { width: 86px; letter-spacing: .2px; }

.tabstrip {
  height: 36px; flex: none; display: flex; padding-left: 8px;
  background: repeating-conic-gradient(#464646 0 25%, #353535 0 50%) 0 0 / 10px 8px;
}
.tab { position: relative; width: 267px; height: 36px; margin-right: -16px; display: flex; align-items: center; flex: none; }
.tabshape { position: absolute; left: 0; top: 0; width: 267px; height: 36px; fill: #bfbfbf; stroke: #858585; stroke-width: 1; }
.active .tabshape { fill: #b0b0b0; }
.active { z-index: 1; }
.fav { width: 20px; height: 20px; margin-left: 21px; position: relative; }
.tablabel { position: relative; margin-left: 8px; width: 171px; white-space: nowrap; overflow: hidden; font-size: 19px; letter-spacing: -.35px; line-height: 30px; }
.fade { -webkit-mask-image: linear-gradient(90deg, #000 125px, transparent 171px); }
.x { width: 12px; height: 12px; margin-left: 11px; position: relative; }
.newtab { margin: 7px 0 0 17px; }
.profile { margin: 3px 8px 0 auto; width: 75px; height: 21px; border: 1px solid #777; border-radius: 2px; color: #f2f2f2; font-size: 16px; line-height: 19px; text-align: center; }

.toolbar {
  height: 81px; flex: none; border-bottom: 1px solid #777;
  background: repeating-linear-gradient(180deg, #b2b2b2 0 2px, #a8a8a8 2px 3px, #afafaf 3px 6px, #a5a5a5 6px 7px, #b5b5b5 7px 9px);
}
.navrow { display: flex; align-items: center; padding-top: 6px; height: 42px; }
.navbtns { display: flex; gap: 16px; padding-left: 13px; width: 156px; flex: none; }
.navbtns svg:nth-child(3) { margin-left: 2px; }
.omnibox { width: 1675px; height: 36px; background: #fff; border: 1px solid #777; border-radius: 3px; display: flex; align-items: center; font-size: 18px; white-space: nowrap; padding: 0 6px 0 11px; }
.secure { color: #0b8043; margin-left: 11px; width: 80px; height: 26px; line-height: 26px; border-right: 1px solid #aaa; letter-spacing: -.4px; }
.url { color: #808080; margin-left: 11px; flex: 1; letter-spacing: -.26px; }
.url b { font-weight: 400; color: #000; }
.scheme { color: #0b8043; }
.translate { margin-right: 12px; }
.ublock { margin-left: 16px; }
.dots { margin-left: 28px; fill: #595959; }

.bookmarks { display: flex; align-items: center; height: 37px; margin-top: 1px; padding-left: 12px; font-size: 19px; letter-spacing: -.4px; white-space: nowrap; }
.bmf { display: flex; align-items: center; gap: 12px; }
.un { width: 76px; }
.slack { width: 85px; }
.icons { display: flex; }
.icons i { width: 36.4px; display: flex; justify-content: center; }
.icons svg { width: 20.500px; height: 20.500px; }
.db { width: 37.500px; padding-left: 3px; }
.more { width: 69px; text-align: right; padding-right: 16px; font-size: 18px; color: #444; height: 24px; line-height: 22px; border-right: 1px solid #949494; }
.other { margin-left: 13px; letter-spacing: .05px; }

.viewport { height: 819px; flex: none; display: flex; background: #fff; font-family: "Liberation Sans", Arial, sans-serif; font-size: 15.600px; color: #333; }
.content { width: 1902px; padding: 16px 196px 0 198px; }
.pane { width: 1508px; height: 737px; border-radius: 5px; padding: 4px 3px 0; background: linear-gradient(#fafafa 0, #fafbfc 48px, #ebeef3 80px); }
.maintabs {
  margin: 0; padding: 6px 0 0 4px; list-style: none; display: flex; gap: 2.800px; height: 44px; position: relative;
  border: 1px solid #1d3f8f; border-radius: 6px; background: linear-gradient(#82b2e0, #72aadb 20px, #4288ce 21px, #3c7dc8);
}
.maintabs li { height: 36px; padding: 0 16px; line-height: 33px; font-weight: 700; color: #1d3687; background: linear-gradient(#fcfcfc, #f7f7f7); border: 1px solid #d3d0cc; border-bottom: 0; border-radius: 5px 5px 0 0; white-space: nowrap; z-index: 1; }
.maintabs .sel { height: 38px; background: #fff; }
.wave { position: absolute; right: 0; top: 0; width: 510px; height: 42px; border-radius: 0 5px 5px 0; background: linear-gradient(#82b2e0, #72aadb 26px); }
.body { display: flex; }
.left { width: 954px; margin-left: -3px; }
.underline { display: flex; justify-content: space-between; padding-left: 25px; padding-right: 19px; }
.dl { margin-top: 33px; text-decoration: underline; text-underline-offset: 2px; }
.legend { width: 135px; height: 52px; border: 3px groove #7cbaf5; background: #dddedf; font-weight: 700; color: #3c4f9f; display: flex; align-items: center; padding-left: 13px; gap: 7px; padding-bottom: 3px; }
.plus { width: 36px; height: 21px; background: #f7f7f7; border: 1px solid #ccc; border-radius: 5px; display: flex; align-items: center; justify-content: center; margin-top: 4px; padding-top: 2px; }
.state { width: 526px; height: 655px; margin: 15px 0 0 3px; border: 3px groove #7cbaf5; padding: 12px 20px 0 19px; }
.state h2 { margin: 0; font-size: 15.600px; line-height: 19px; color: #2b419b; }
.buttons { display: flex; gap: 5.500px; margin-top: 14px; }
.btn { height: 34px; width: 84px; border: 1px solid #c6c6c6; border-radius: 5px; background: linear-gradient(#fdfdfd, #f5f5f5 50%, #fafafa); color: #1d3687; font-weight: 700; line-height: 31px; display: flex; padding-left: 13px; gap: 7px; }
.btn svg { margin-top: 13px; }
.btn.off { opacity: .38; padding-left: 13px; }
.btn.ff { width: 140px; padding-left: 11px; }
.inner { height: 178px; border: 1px solid #fff; border-radius: 5px; background: linear-gradient(#fafbfc, #f9fafc 50px, #ebeef3 80px); padding: 8px 7px; }
.subtabs { display: flex; gap: 3px; }
.subtabs span { height: 38px; border: 1px solid #bbb; border-radius: 5px 5px 0 0; color: #1d3687; font-weight: 700; line-height: 34px; padding: 0 16px; }
.subtabs .on { border-bottom: 0; }
.inner h3 { font-size: 15.600px; margin: 31px 0 0 19px; line-height: 18px; }
.inner p { margin: 17px 0 0 19px; line-height: 18px; }
footer { text-align: right; width: 1507px; margin-top: 37px; line-height: 18px; white-space: nowrap; letter-spacing: .015px; }
footer a { color: #5a0ee0; text-decoration: underline; }
.scroll { width: 18px; background: #f1f1f1; display: flex; flex-direction: column; }
.thumb { height: 673px; margin: 107px 1px 0 2px; background: #c1c1c1; }

.shelf { height: 63px; flex: none; background: #dcdcdc; border-top: 2px solid #d0d0d0; border-bottom: 1px solid #8b8f8b; display: flex; align-items: center; font-size: 20px; letter-spacing: .15px; white-space: nowrap; }
.dlitem { width: 295.300px; height: 48px; border-right: 1px solid #b1b1b1; display: flex; align-items: center; padding: 0 23px 0 22px; }
.dlitem span { margin-left: 18px; margin-top: 5px; flex: 1; }
.dlitem:first-child { width: 299px; padding-left: 26px; }
.showall { margin-left: auto; width: 160px; height: 39px; border: 1px solid #707070; border-radius: 4px; background: #cecece; text-align: center; line-height: 34px; font-weight: 500; font-size: 19.500px; letter-spacing: .1px; }
.shelfx { margin: 0 17px 0 16px; }

.launcher { height: 50px; flex: none; background: #000; display: flex; padding-left: 3px; }
.launcher i { width: 44px; height: 50px; padding: 10px 7px; position: relative; flex: none; }
.launcher svg { width: 30px; height: 30px; overflow: hidden; }
.launcher .trash { margin-left: auto; margin-right: 3px; }
.run::after { content: ""; position: absolute; left: 19px; bottom: 0; border: 3px solid transparent; border-bottom: 4px solid #ddd; border-top: 0; }
.top::before { content: ""; position: absolute; left: 19px; top: 0; border: 3px solid transparent; border-top: 3px solid #999; border-bottom: 0; }

.graph line { stroke: #000; stroke-width: 2.400; }
.graph .dash { stroke: #858585; stroke-width: 1.250; stroke-dasharray: 12.700 4.960; }
.graph circle { fill: #98beea; stroke: #2f4fbf; stroke-width: 2.400; }
.graph text { font-size: 15px; fill: #000; text-anchor: middle; }
```
FILE: graph.js
```
// Bipartite graph: top row h..n, bottom row a..g.
const svg = document.querySelector('.graph');
const NS = 'http://www.w3.org/2000/svg';
const TOP = 297.3, BOTTOM = 741.7, X0 = 280.2, STEP = 132.6;

// Weighted edges per top node; every other pair is a dashed edge.
const edges = { h: 'acd', i: 'aef', j: 'acg', k: 'bde', l: 'bdf', m: 'beg', n: 'acefg' };
const labels = [
  [408, 421.7, 95], [669.3, 421.7, 21], [762.5, 421.7, 42],
  [395, 466, 86], [536.5, 466, 69], [766.5, 466, 13], [855, 466, 12], [1005, 466, 57], [1067.3, 466, 83],
  [510.2, 554.7, 14], [563.3, 554.7, 55], [616, 554.7, 56], [740, 554.7, 29], [899, 554.7, 39], [987.5, 554.7, 66],
  [271.4, 599, 17], [311, 599, 49], [351, 599, 37], [510.2, 599, 42], [695.5, 599, 3], [779.5, 599, 57], [841.5, 599, 41], [881.5, 599, 93]
];

function add(tag, attrs, text) {
  const el = document.createElementNS(NS, tag);
  for (const k in attrs) el.setAttribute(k, attrs[k]);
  if (text !== undefined) el.textContent = text;
  svg.appendChild(el);
}

function drawEdges(solid) {
  [...'hijklmn'].forEach((t, i) => [...'abcdefg'].forEach((b, j) => {
    if (edges[t].includes(b) !== solid) return;
    add('line', { x1: X0 + STEP * j, y1: BOTTOM, x2: X0 + STEP * i, y2: TOP, class: solid ? 'solid' : 'dash' });
  }));
}

drawEdges(true);
labels.forEach(([x, y, w]) => add('text', { x, y: y + 5.3 }, w));
drawEdges(false);

[['hijklmn', TOP], ['abcdefg', BOTTOM]].forEach(([names, y]) => [...names].forEach((n, i) => {
  const x = X0 + STEP * i;
  add('circle', { cx: x, cy: y, r: 25.9 });
  add('text', { x, y: y + 5.3 }, n);
}));
```
